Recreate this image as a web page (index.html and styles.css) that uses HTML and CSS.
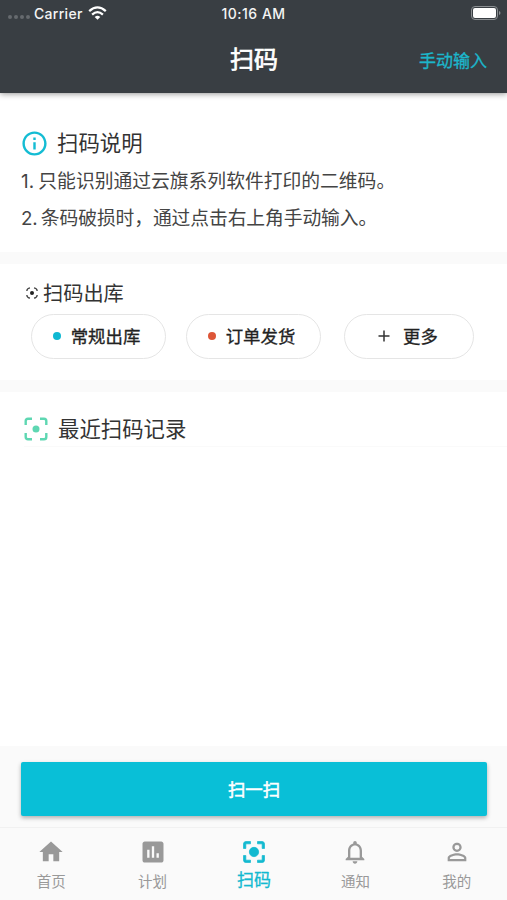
FILE: index.html
```html
<!DOCTYPE html>
<html lang="zh-CN">
<head>
<meta charset="utf-8">
<meta name="viewport" content="width=device-width, initial-scale=1">
<title>扫码</title>
<link rel="stylesheet" href="styles.css">
</head>
<body>
<div class="app">
  <header class="header">
    <div class="status">
      <div class="status-left">
        <span class="signal"><i></i><i></i><i></i><i></i></span>
        <span class="carrier">Carrier</span>
        <svg class="wifi" viewBox="0 0 19 14" fill="none" stroke="#fff" stroke-width="2.3"><path d="M1.2 5.200Q9.500-2.400 17.800 5.200"/><path d="M4.100 8.600Q9.500 3.600 14.900 8.600"/><path d="M9.500 13.800L6.700 11Q9.500 8.600 12.300 11Z" fill="#fff" stroke="none"/></svg>
      </div>
      <span class="time">10:16 AM</span>
      <svg class="battery" viewBox="0 0 30 14"><rect x=".5" y=".5" width="26" height="13" rx="3.5" fill="none" stroke="#8b8f92"/><rect x="2" y="2" width="23" height="10" rx="2" fill="#fff"/><path d="M28 5q1.500.6 1.500 2T28 9z" fill="#8b8f92"/></svg>
    </div>
    <div class="navbar">
      <h1 class="title">扫码</h1>
      <a class="manual">手动输入</a>
    </div>
  </header>

  <main class="content">
    <section class="card info">
      <h2 class="heading">
        <svg class="icon-info" viewBox="0 0 24 24"><path d="M11 17h2v-6h-2v6zm1-15C6.480 2 2 6.480 2 12s4.480 10 10 10 10-4.480 10-10S17.520 2 12 2zm0 18c-4.410 0-8-3.590-8-8s3.590-8 8-8 8 3.590 8 8-3.590 8-8 8zM11 9h2V7h-2v2z"/></svg>
        <span>扫码说明</span>
      </h2>
      <p class="line">1. 只能识别通过云旗系列软件打印的二维码。</p>
      <p class="line second">2. 条码破损时，通过点击右上角手动输入。</p>
    </section>

    <section class="card outbound">
      <h2 class="subheading"><svg class="icon-mini" viewBox="0 0 12 12"><path d="M.8 4Q1 1.200 4 .8M8 .8Q11 1.200 11.200 4M11.200 8Q11 10.800 8 11.200M4 11.200Q1 10.800.8 8"/><circle cx="6" cy="6" r="2"/></svg><span>扫码出库</span></h2>
      <div class="chips">
        <button class="chip"><i class="dot cyan"></i>常规出库</button>
        <button class="chip"><i class="dot red"></i>订单发货</button>
        <button class="chip more"><svg class="plus" viewBox="0 0 12 12"><path d="M6 .5v11M.5 6h11"/></svg>更多</button>
      </div>
    </section>

    <section class="card recent">
      <h2 class="heading recent-heading">
        <svg class="icon-recent" viewBox="0 0 24 24"><path d="M1.700 8V4Q1.700 1.700 4 1.700H8M16 1.700h4Q22.300 1.700 22.300 4V8M22.300 16v4Q22.300 22.300 20 22.300H16M8 22.300H4Q1.700 22.300 1.700 20V16"/><circle cx="12" cy="12" r="3.5"/></svg>
        <span>最近扫码记录</span>
      </h2>
    </section>
  </main>

  <div class="action"><button class="scan">扫一扫</button></div>

  <nav class="tabs">
    <a class="tab"><svg viewBox="0 0 24 24"><path d="M10 20v-6h4v6h5v-8h3L12 3 2 12h3v8z"/></svg><span>首页</span></a>
    <a class="tab"><svg viewBox="0 0 24 24"><path d="M19 3H5c-1.100 0-2 .9-2 2v14c0 1.100.9 2 2 2h14c1.100 0 2-.9 2-2V5c0-1.100-.9-2-2-2zM9 17H7v-7h2v7zm4 0h-2V7h2v10zm4 0h-2v-4h2v4z"/></svg><span>计划</span></a>
    <a class="tab active"><svg viewBox="0 0 24 24"><path d="M12 8c-2.210 0-4 1.790-4 4s1.790 4 4 4 4-1.790 4-4-1.790-4-4-4zm-7 7H3v4c0 1.100.9 2 2 2h4v-2H5v-4zM5 5h4V3H5c-1.100 0-2 .9-2 2v4h2V5zm14-2h-4v2h4v4h2V5c0-1.100-.9-2-2-2zm0 16h-4v2h4c1.100 0 2-.9 2-2v-4h-2v4z"/></svg><span>扫码</span></a>
    <a class="tab"><svg viewBox="0 0 24 24"><path d="M12 22c1.100 0 2-.9 2-2h-4c0 1.100.9 2 2 2zm6-6v-5c0-3.070-1.630-5.640-4.500-6.320V4c0-.83-.67-1.500-1.500-1.500s-1.500.67-1.500 1.500v.68C7.640 5.360 6 7.920 6 11v5l-2 2v1h16v-1l-2-2zm-2 1H8v-6c0-2.480 1.510-4.500 4-4.500s4 2.020 4 4.500v6z"/></svg><span>通知</span></a>
    <a class="tab"><svg viewBox="0 0 24 24"><path d="M12 5.900a2.100 2.100 0 1 1 0 4.200 2.100 2.100 0 0 1 0-4.200m0 9c2.970 0 6.100 1.460 6.100 2.100v1.100H5.900V17c0-.64 3.130-2.100 6.100-2.100M12 4C9.790 4 8 5.790 8 8s1.790 4 4 4 4-1.790 4-4-1.790-4-4-4zm0 9c-2.670 0-8 1.340-8 4v3h16v-3c0-2.660-5.330-4-8-4z"/></svg><span>我的</span></a>
  </nav>
</div>
</body>
</html>
```
FILE: styles.css
```css
* { box-sizing: border-box; }
body {
  margin: 0;
  font-family: Inter, "Noto Sans CJK SC", sans-serif;
  color: #333;
  background: #fafafa;
}
h1, h2, p { margin: 0; font-weight: 400; }
button { font: inherit; color: inherit; padding: 0; border: 0; }
svg { display: block; flex: none; fill: currentColor; }

.app { display: flex; flex-direction: column; height: 900px; overflow: hidden; }

.header {
  position: relative;
  height: 93px;
  flex: none;
  margin-bottom: 1px;
  color: #fff;
  background: #393e43;
  box-shadow: 0 1px 6px rgba(0, 0, 0, .4);
}
.status {
  display: grid;
  grid-template-columns: 1fr auto 1fr;
  align-items: center;
  height: 26px;
  padding: 0 6px 0 8px;
  font-size: 14px;
  font-weight: 500;
  color: #f4f4f4;
}
.status-left { display: flex; align-items: center; }
.signal { display: flex; gap: 2px; width: 26px; padding-top: 8px; }
.signal i { width: 4px; height: 4px; border-radius: 50%; background: #666a6e; }
.carrier { letter-spacing: .3px; }
.wifi { width: 19px; height: 14px; margin-left: 5px; fill: none; }
.time { font-size: 14px; letter-spacing: .5px; padding-right: 2px; }
.battery { width: 30px; height: 14px; justify-self: end; }

.navbar {
  display: grid;
  grid-template-columns: 1fr auto 1fr;
  align-items: center;
  height: 67px;
  padding-right: 20px;
}
.title { grid-column: 2; font-size: 24px; line-height: 30px; -webkit-text-stroke: .7px; padding-left: 21px; }
.manual { justify-self: end; margin-top: -1px; font-size: 17px; color: #1cb6cb; -webkit-text-stroke: .3px; }

.content { display: flex; flex: 1; flex-direction: column; gap: 12px; }
.card { background: #fff; }

.heading { display: flex; align-items: center; font-size: 21.4px; line-height: 32px; color: #333; }
.info { height: 158px; padding: 33px 21px 0; }
.icon-info { width: 29px; height: 29px; margin-right: 8px; color: #14bcd3; }
.line { font-size: 18.8px; line-height: 37px; color: #444; white-space: nowrap; word-spacing: -1px; }
.second { word-spacing: -2px; letter-spacing: -.1px; }
.info .heading { margin: 0 0 4px -1px; }

.outbound { height: 116px; padding: 15px 24px 0; }
.subheading { display: flex; align-items: center; font-size: 20.2px; line-height: 30px; color: #333; }
.icon-mini { width: 12px; height: 12px; margin: -2px 5px 0 2px; color: #222; }
.icon-mini path { fill: none; stroke: #444; stroke-width: 1.3; }
.chips { display: flex; padding: 5px 0 0 7px; }
.chip {
  display: flex;
  align-items: center;
  justify-content: center;
  width: 135px;
  height: 45px;
  margin-right: 20px;
  padding: 0 4px 2px 0;
  border: 1.5px solid #e5e5e5;
  border-radius: 23px;
  background: #fff;
  font-size: 17.4px;
  color: #222;
  -webkit-text-stroke: .3px;
}
.dot { width: 8px; height: 8px; margin-right: 10px; border-radius: 50%; }
.cyan { background: #0fb8d2; }
.red { background: #dd5638; }
.more { width: 130px; margin: 0 0 0 3px; padding-right: 2px; }
.plus { width: 12px; height: 12px; margin-right: 13px; fill: none; stroke: #333; stroke-width: 1.5; }

.recent { flex: 1; padding: 20px 0 0 24px; }
.recent-heading { height: 35px; border-bottom: 1px solid #fafafa; }
.icon-recent { width: 24px; height: 24px; margin-right: 10px; color: #5ed7b2; }
.icon-recent path { fill: none; stroke: currentColor; stroke-width: 2.4; }

.action { flex: none; height: 81px; padding: 16px 20px 0 21px; }
.scan {
  display: block;
  width: 100%;
  height: 54px;
  padding-bottom: 2px;
  border-radius: 2px;
  background: #09bfd7;
  color: #fff;
  font-size: 17.4px;
  -webkit-text-stroke: .5px;
  box-shadow: 0 2px 4px rgba(0, 0, 0, .3);
}

.tabs {
  display: grid;
  grid-template-columns: repeat(5, 1fr);
  flex: none;
  height: 73px;
  border-top: 1px solid #f1f1f1;
}
.tab {
  display: flex;
  flex-direction: column;
  align-items: center;
  padding: 10px 0 0 1px;
  font-size: 14.5px;
  line-height: 20px;
  color: #999;
}
.tab svg { width: 28px; height: 28px; margin-bottom: 6px; }
.tab.active { font-size: 17px; color: #12b9d0; }
.tab.active svg { stroke: currentColor; stroke-width: .6; }
.tab.active span { margin-top: -2px; -webkit-text-stroke: .3px; }
```
